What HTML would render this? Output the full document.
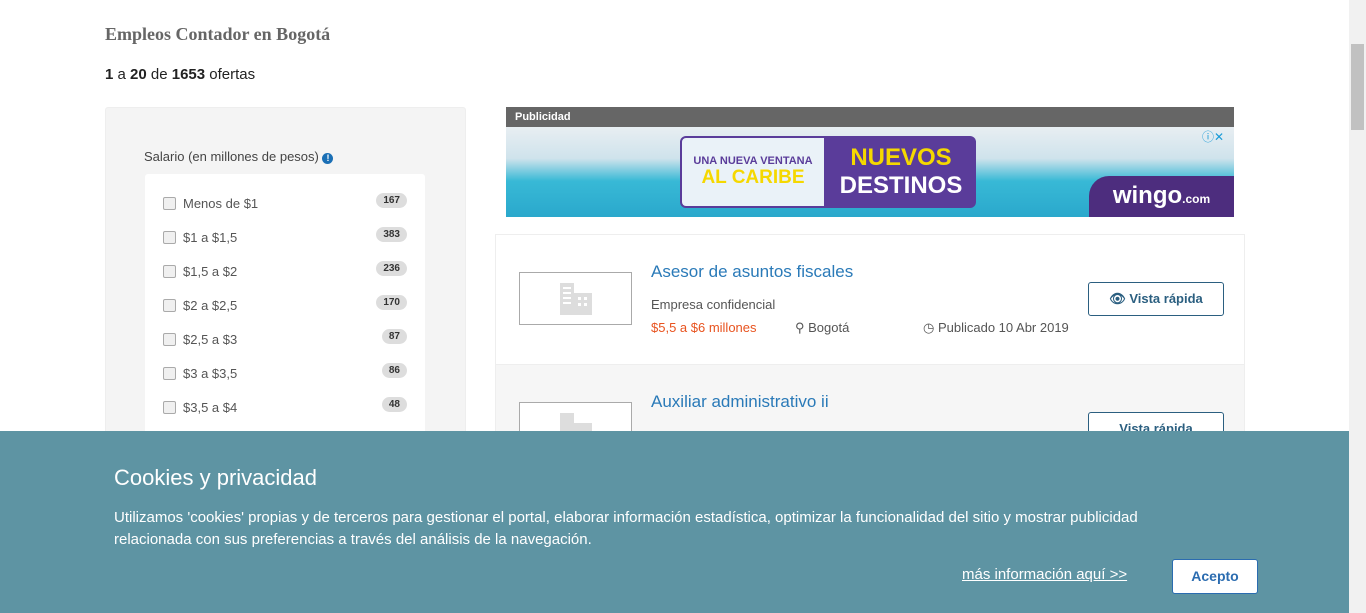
<!DOCTYPE html>
<html><head><meta charset="utf-8"><style>
body{margin:0;width:1366px;height:613px;overflow:hidden;background:#fff;font-family:"Liberation Sans",sans-serif;position:relative}
.abs{position:absolute}
.h1{left:105px;top:24px;font-family:"Liberation Serif",serif;font-weight:bold;font-size:18px;color:#666}
.cnt{left:105px;top:66px;font-size:15px;color:#222}
.side{left:105px;top:107px;width:359px;height:340px;background:#f4f4f4;border:1px solid #eee;border-radius:3px}
.sl{left:144px;top:149px;font-size:13px;color:#444}
.box{left:145px;top:174px;width:280px;height:270px;background:#fff;border-radius:3px}
.row{position:absolute;left:18px;font-size:13px;color:#555}
.row i{display:inline-block;width:11px;height:11px;border:1px solid #aaa;border-radius:2px;background:#f0f0f0;vertical-align:-2px;margin-right:7px}
.b{position:absolute;right:18px;background:#ddd;border-radius:9px;font-size:10px;font-weight:bold;padding:2px 7px;color:#333}
.card{left:495px;width:748px;height:129px;border:1px solid #eee}
.logo{position:absolute;left:23px;top:37px;width:111px;height:51px;border:1px solid #aaa;background:#fff}
.t{position:absolute;left:155px;font-size:17px;color:#2a7ab8}
.btn{position:absolute;left:592px;top:47px;width:134px;height:32px;border:1px solid #2b5f80;border-radius:3px;font-size:13px;font-weight:bold;color:#2b5f80;text-align:center;line-height:32px;background:#fff}
</style></head><body>
<div class="abs h1">Empleos Contador en Bogotá</div>
<div class="abs cnt"><b>1</b> a <b>20</b> de <b>1653</b> ofertas</div>
<div class="abs side"></div>
<div class="abs sl">Salario (en millones de pesos) <span style="display:inline-block;width:11px;height:11px;border-radius:6px;background:#1a6fb5;color:#fff;font-size:9px;text-align:center;line-height:11px;font-weight:bold">!</span></div>
<div class="abs box">
<div class="row" style="top:22px"><i></i>Menos de $1</div><span class="b" style="top:19px">167</span>
<div class="row" style="top:56px"><i></i>$1 a $1,5</div><span class="b" style="top:53px">383</span>
<div class="row" style="top:90px"><i></i>$1,5 a $2</div><span class="b" style="top:87px">236</span>
<div class="row" style="top:124px"><i></i>$2 a $2,5</div><span class="b" style="top:121px">170</span>
<div class="row" style="top:158px"><i></i>$2,5 a $3</div><span class="b" style="top:155px">87</span>
<div class="row" style="top:192px"><i></i>$3 a $3,5</div><span class="b" style="top:189px">86</span>
<div class="row" style="top:226px"><i></i>$3,5 a $4</div><span class="b" style="top:223px">48</span>
</div>
<div class="abs" style="left:506px;top:107px;width:728px;height:20px;background:#666;color:#fff;font-size:11px;font-weight:bold;line-height:20px;padding-left:9px;box-sizing:border-box">Publicidad</div>
<div class="abs" style="left:506px;top:127px;width:728px;height:90px;background:linear-gradient(180deg,#e8eef2 0%,#cfe3ec 35%,#38b9d6 60%,#2aa8cc 100%)">
<div class="abs" style="left:174px;top:9px;width:146px;height:72px;background:#eaf2f8;border:2px solid #5a3c9a;border-radius:6px 0 0 6px;box-sizing:border-box;font-weight:bold;text-align:center;color:#5a3c9a;font-size:11px;padding-top:17px">UNA NUEVA VENTANA<div style="color:#f5d800;font-size:19px">AL CARIBE</div></div>
<div class="abs" style="left:320px;top:9px;width:150px;height:72px;background:#5a3c9a;border-radius:0 6px 6px 0;text-align:center;color:#fff;font-weight:bold;font-size:24px;line-height:28px;padding-top:8px;box-sizing:border-box"><span style="color:#f5d800">NUEVOS</span><br>DESTINOS</div>
<div class="abs" style="left:583px;top:49px;width:145px;height:41px;background:#4d2d7e;border-radius:20px 0 0 0;color:#fff;font-weight:bold;font-size:24px;text-align:center;line-height:40px">wingo<span style="font-size:12px">.com</span></div>
<div class="abs" style="left:696px;top:1px;font-size:12px;color:#1a9bd7">ⓘ✕</div>
</div>
<div class="abs card" style="top:234px;background:#fff">
<div class="logo"><svg width="111" height="51"><g fill="#ddd"><rect x="40" y="10" width="14" height="32"/><rect x="54" y="20" width="18" height="22"/></g><g fill="#fff"><rect x="43" y="14" width="8" height="2"/><rect x="43" y="19" width="8" height="2"/><rect x="43" y="24" width="8" height="2"/><rect x="43" y="29" width="8" height="2"/><rect x="58" y="24" width="3" height="3"/><rect x="64" y="24" width="3" height="3"/><rect x="58" y="30" width="3" height="3"/><rect x="64" y="30" width="3" height="3"/></g></svg></div><div class="t" style="top:27px">Asesor de asuntos fiscales</div>
<div class="abs" style="left:155px;top:62px;font-size:13px;color:#555">Empresa confidencial</div>
<div class="abs" style="left:155px;top:85px;font-size:13px;color:#e8531f">$5,5 a $6 millones</div>
<div class="abs" style="left:299px;top:85px;font-size:13px;color:#555">⚲ Bogotá</div>
<div class="abs" style="left:427px;top:85px;font-size:13px;color:#555">◷ Publicado 10 Abr 2019</div>
<div class="btn">👁 Vista rápida</div>
</div>
<div class="abs card" style="top:364px;background:#f6f6f6">
<div class="logo"><svg width="111" height="51"><g fill="#ddd"><rect x="40" y="10" width="14" height="32"/><rect x="54" y="20" width="18" height="22"/></g></svg></div><div class="t" style="top:27px">Auxiliar administrativo ii</div>
<div class="btn">Vista rápida</div>
</div>
<div class="abs" style="left:0;top:431px;width:1349px;height:182px;background:#5e94a3;color:#fff">
<div class="abs" style="left:114px;top:34px;font-size:22px">Cookies y privacidad</div>
<div class="abs" style="left:114px;top:76px;width:1095px;font-size:15px;line-height:22px">Utilizamos 'cookies' propias y de terceros para gestionar el portal, elaborar información estadística, optimizar la funcionalidad del sitio y mostrar publicidad relacionada con sus preferencias a través del análisis de la navegación.</div>
<div class="abs" style="left:962px;top:135px;font-size:15px;text-decoration:underline">más información aquí &gt;&gt;</div>
<div class="abs" style="left:1172px;top:128px;width:84px;height:33px;background:#fff;border:1px solid #2b6cb0;border-radius:3px;color:#2b6cb0;font-weight:bold;font-size:14px;text-align:center;line-height:33px">Acepto</div>
</div>
<div class="abs" style="left:1349px;top:0;width:17px;height:613px;background:#f1f1f1"><div style="position:absolute;left:2px;top:44px;width:13px;height:86px;background:#c1c1c1"></div></div>
</body></html>
